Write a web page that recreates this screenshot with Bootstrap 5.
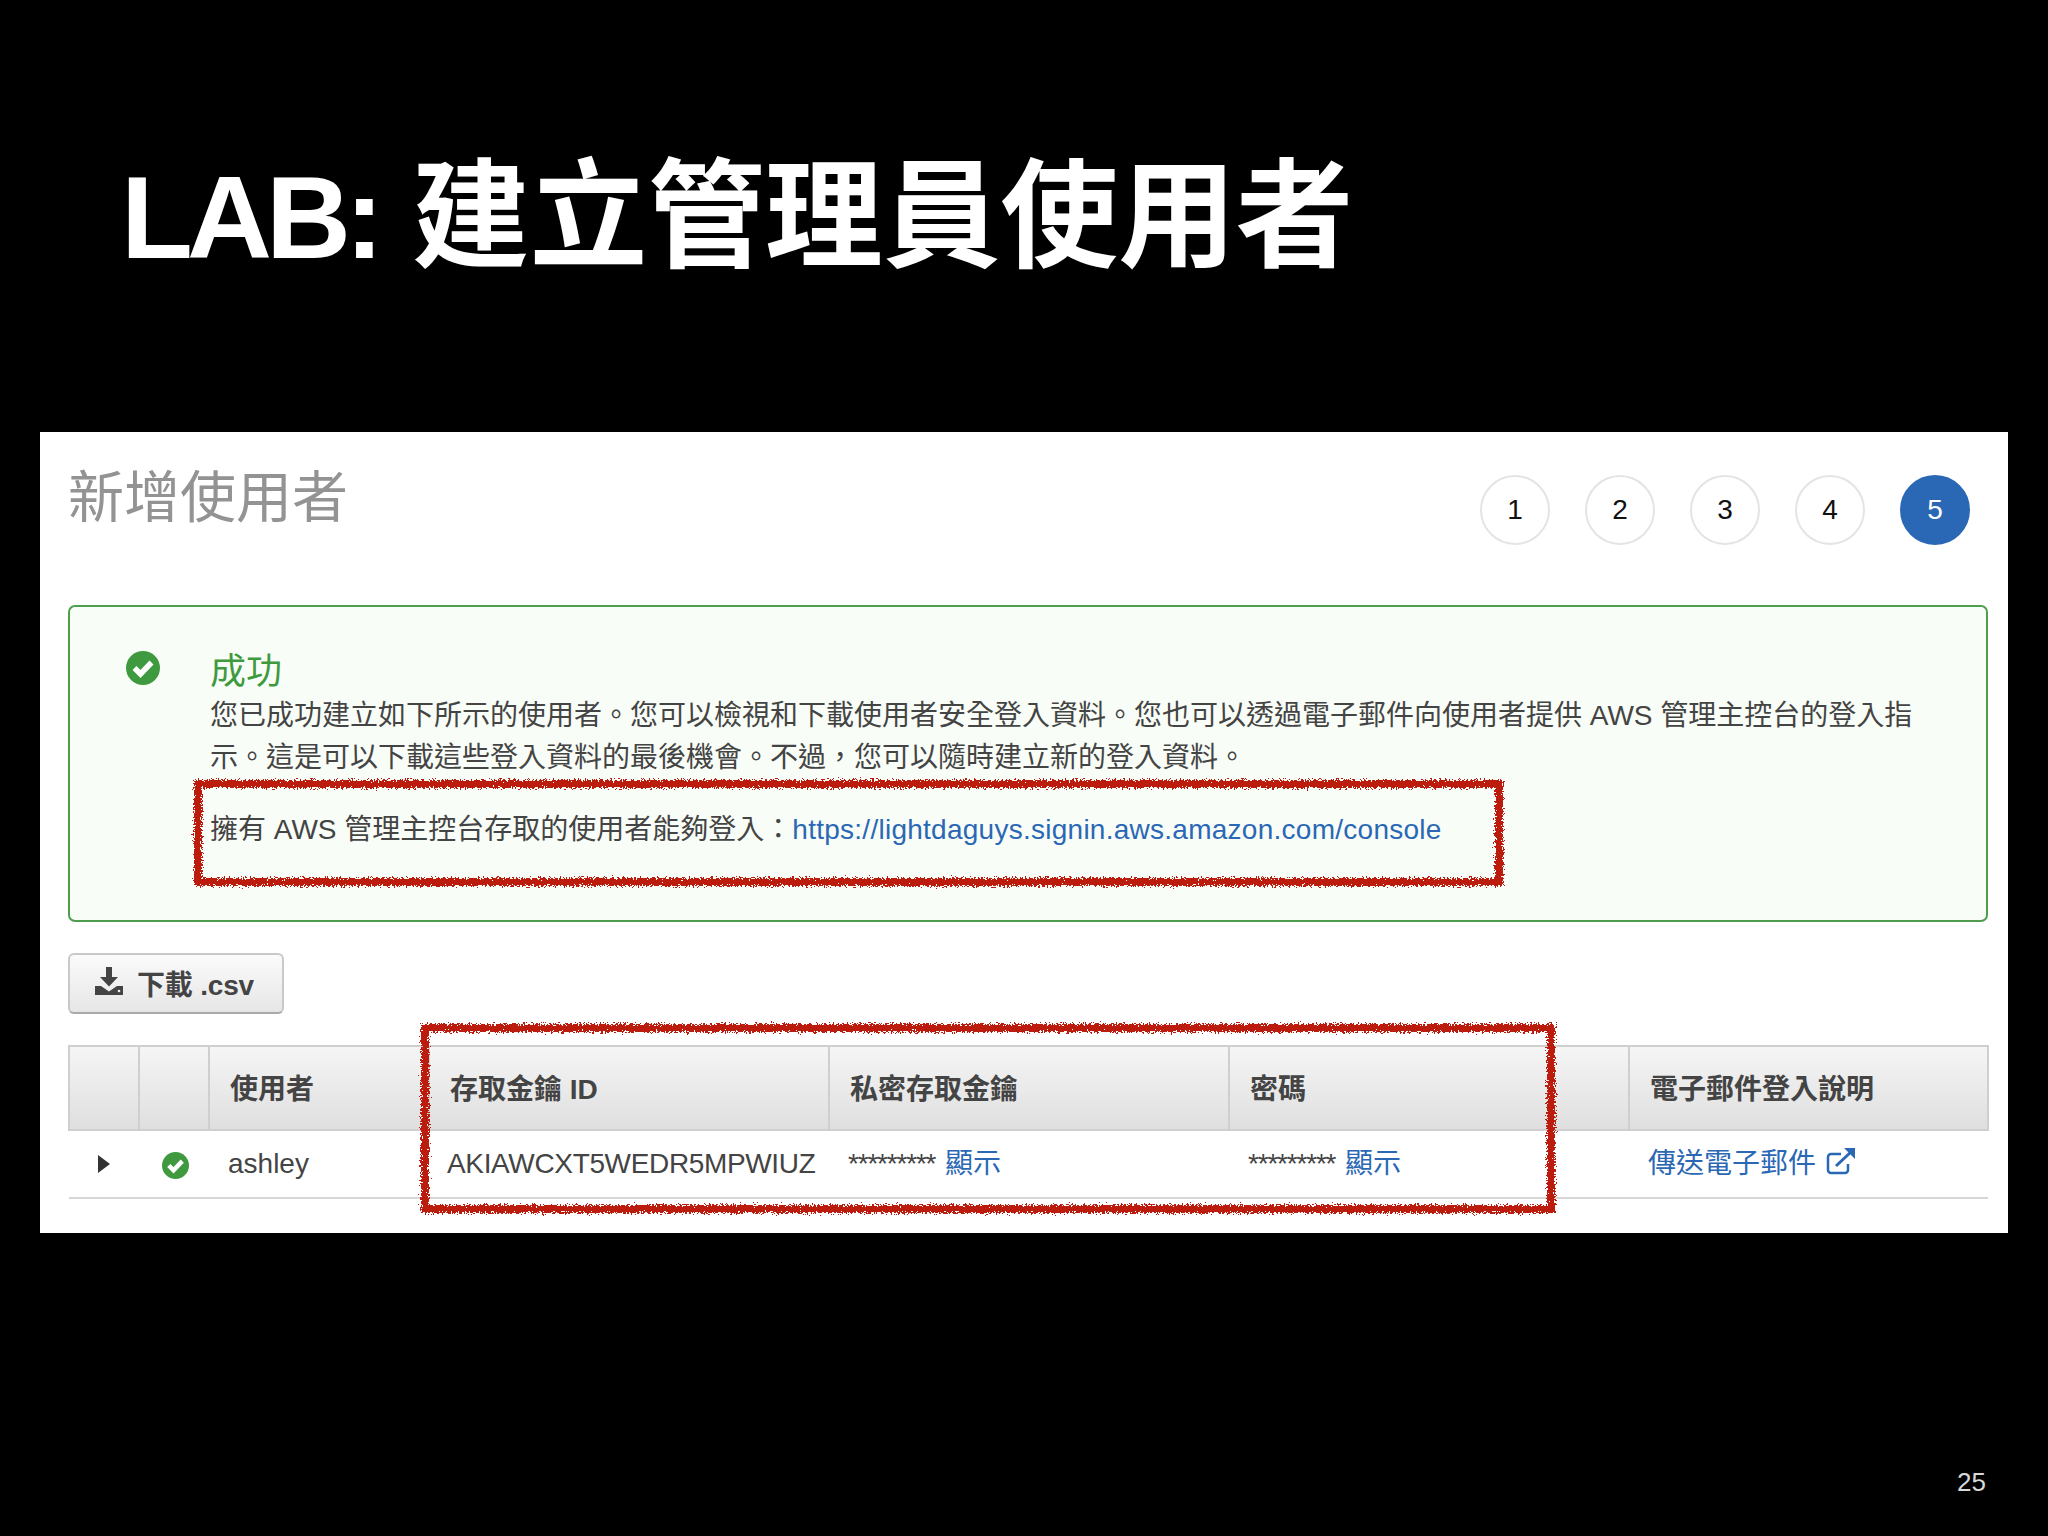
<!DOCTYPE html>
<html lang="zh-Hant">
<head>
<meta charset="utf-8">
<title>LAB: 建立管理員使用者</title>
<link href="https://cdn.jsdelivr.net/npm/bootstrap@5.3.0/dist/css/bootstrap.min.css" rel="stylesheet">
<style>
html,body{background:#000;margin:0;}
body{font-family:"Liberation Sans","Noto Sans CJK TC",sans-serif;width:2048px;height:1536px;position:relative;overflow:hidden;color:#444;}
.slide-head{height:432px;padding:4px 0 0 121px;color:#fff;font-size:117.700px;font-weight:700;line-height:1;margin:0;}
.slide-head .latin{letter-spacing:-6px;margin-right:34px;}
.sheet{background:#fff;margin-left:40px;width:1968px;height:801px;padding:0 20px 0 28px;}
.sheet-top{height:173px;}
.sheet-heading{font-size:56px;font-weight:400;color:#939393;line-height:1;margin:38px 0 0;}
.steps{gap:35px;margin:43px 18px 0 0;}
.step-dot{width:70px;height:70px;border-radius:50%;border:2px solid #e4e4e4;font-size:28px;color:#111;}
.step-dot.is-on{background:#2a68b5;border-color:#2a68b5;color:#fff;}
.ok-panel{height:317px;background:#f9fdf7;border:2px solid #4f9e50;border-radius:7px;padding:43px 40px 0 56px;font-size:28px;line-height:42px;}
.ok-icon{width:34px;height:34px;margin-top:1px;margin-right:50px;flex:none;}
.ok-title{font-size:36px;color:#3f9a3f;line-height:44px;font-weight:400;margin:0 0 1px;}
.ok-text{margin:0;}
.ok-link{margin-top:30px;}
.ok-link a{letter-spacing:.26px;}
.sheet a{color:#2a68b5;text-decoration:none;}
.dl-btn{margin:31px 0;height:61px;width:216px;padding:0;background:linear-gradient(#fbfbfb,#e6e6e6);border:2px solid #c9c9c9;border-bottom-color:#aaa;border-radius:6px;font-size:28px;font-weight:700;color:#444;gap:13px;}
.dl-btn:hover{color:#444;background:#eee;border-color:#c9c9c9;}
.dl-btn svg{margin:-5px 0 0 -4px;}
.dl-btn span{padding-top:4px;letter-spacing:-.2px;}
.user-grid{table-layout:fixed;width:1919px;margin:0;font-size:28px;color:#444;}
.user-grid th{height:84px;padding:4px 20px 0;vertical-align:middle;background:linear-gradient(#f5f5f5,#dfdfe0);border:0;border-top:2px solid #cfcfcf;border-bottom:2px solid #cfcfcf;border-left:2px solid #cfcfcf;color:#444;font-weight:700;}
.user-grid th:last-child{border-right:2px solid #cfcfcf;}
.user-grid td{height:68px;padding:0 19px;vertical-align:middle;border:0;border-bottom:2px solid #d6d6d6;background:#fff;color:#444;white-space:nowrap;}
.user-grid td.mark-cell{padding:0;text-align:center;}
.user-grid td.key-text{padding:0 18px;letter-spacing:-.35px;}
.stars{letter-spacing:-1.2px;margin-right:2px;}
.tri{display:inline-block;width:0;height:0;border-left:12px solid #333;border-top:9px solid transparent;border-bottom:9px solid transparent;}
.grid-check{width:27px;height:27px;vertical-align:middle;margin-left:3px;}
.ext-icon{width:30px;height:28px;margin-left:10px;vertical-align:-2px;}
.page-no{color:#d8d8d8;font-size:26px;line-height:30px;margin-top:234px;padding-right:62px;text-align:right;}
.ink{position:absolute;left:0;top:0;pointer-events:none;}
</style>
</head>
<body>
<h1 class="slide-head d-flex align-items-center"><span class="latin">LAB:</span><span>建立管理員使用者</span></h1>

<main class="sheet">
  <div class="sheet-top d-flex justify-content-between align-items-start">
    <h2 class="sheet-heading">新增使用者</h2>
    <div class="steps d-flex">
      <div class="step-dot d-flex align-items-center justify-content-center">1</div>
      <div class="step-dot d-flex align-items-center justify-content-center">2</div>
      <div class="step-dot d-flex align-items-center justify-content-center">3</div>
      <div class="step-dot d-flex align-items-center justify-content-center">4</div>
      <div class="step-dot is-on d-flex align-items-center justify-content-center">5</div>
    </div>
  </div>

  <section class="ok-panel d-flex align-items-start">
    <svg class="ok-icon" viewBox="0 0 34 34"><circle cx="17" cy="17" r="17" fill="#3f9a3f"/><path d="M8.500 17l6 6L25.500 11.500" fill="none" stroke="#fff" stroke-width="5.500"/></svg>
    <div>
      <h3 class="ok-title">成功</h3>
      <p class="ok-text">您已成功建立如下所示的使用者。您可以檢視和下載使用者安全登入資料。您也可以透過電子郵件向使用者提供 AWS 管理主控台的登入指<br>示。這是可以下載這些登入資料的最後機會。不過，您可以隨時建立新的登入資料。</p>
      <p class="ok-text ok-link">擁有 AWS 管理主控台存取的使用者能夠登入：<a href="#">https://lightdaguys.signin.aws.amazon.com/console</a></p>
    </div>
  </section>

  <button type="button" class="btn dl-btn d-flex align-items-center justify-content-center">
    <svg width="30" height="30" viewBox="0 0 30 30"><path d="M12 1h6v10h6l-9 9.500L6 11h6z" fill="#444"/><path d="M1 20h6l8 5.500L23 20h6v9H1z" fill="#444"/><circle cx="25" cy="25" r="1.300" fill="#eee"/></svg>
    <span>下載 .csv</span>
  </button>

  <table class="table user-grid">
    <colgroup><col style="width:70px"><col style="width:70px"><col style="width:220px"><col style="width:400px"><col style="width:400px"><col style="width:400px"><col style="width:359px"></colgroup>
    <thead>
      <tr><th></th><th></th><th>使用者</th><th>存取金鑰 ID</th><th>私密存取金鑰</th><th>密碼</th><th>電子郵件登入說明</th></tr>
    </thead>
    <tbody>
      <tr>
        <td class="mark-cell"><span class="tri"></span></td>
        <td class="mark-cell"><svg class="grid-check" viewBox="0 0 34 34"><circle cx="17" cy="17" r="17" fill="#3f9a3f"/><path d="M8.500 17l6 6L25.500 11.500" fill="none" stroke="#fff" stroke-width="5.500"/></svg></td>
        <td>ashley</td>
        <td class="key-text">AKIAWCXT5WEDR5MPWIUZ</td>
        <td><span class="stars">*********</span> <a href="#">顯示</a></td>
        <td><span class="stars">*********</span> <a href="#">顯示</a></td>
        <td><a href="#">傳送電子郵件<svg class="ext-icon" viewBox="0 0 30 28"><path d="M15 7H5a3 3 0 0 0-3 3v13a3 3 0 0 0 3 3h14a3 3 0 0 0 3-3v-6" fill="none" stroke="#2a68b5" stroke-width="2.500"/><path d="M10 19L26 4" fill="none" stroke="#2a68b5" stroke-width="3"/><path d="M18 1h11v11z" fill="#2a68b5"/></svg></a></td>
      </tr>
    </tbody>
  </table>
</main>

<div class="page-no">25</div>

<svg class="ink" width="2048" height="1536" viewBox="0 0 2048 1536">
  <defs>
    <filter id="rough" x="-5%" y="-5%" width="110%" height="110%">
      <feTurbulence type="fractalNoise" baseFrequency="0.55" numOctaves="3" seed="4"/>
      <feDisplacementMap in="SourceGraphic" scale="9" xChannelSelector="R" yChannelSelector="G"/>
    </filter>
  </defs>
  <g fill="none" stroke="#bb1c0b" stroke-width="8" filter="url(#rough)">
    <rect x="198" y="784" width="1301" height="98"/>
    <rect x="425" y="1028" width="1126" height="181"/>
  </g>
</svg>
</body>
</html>
